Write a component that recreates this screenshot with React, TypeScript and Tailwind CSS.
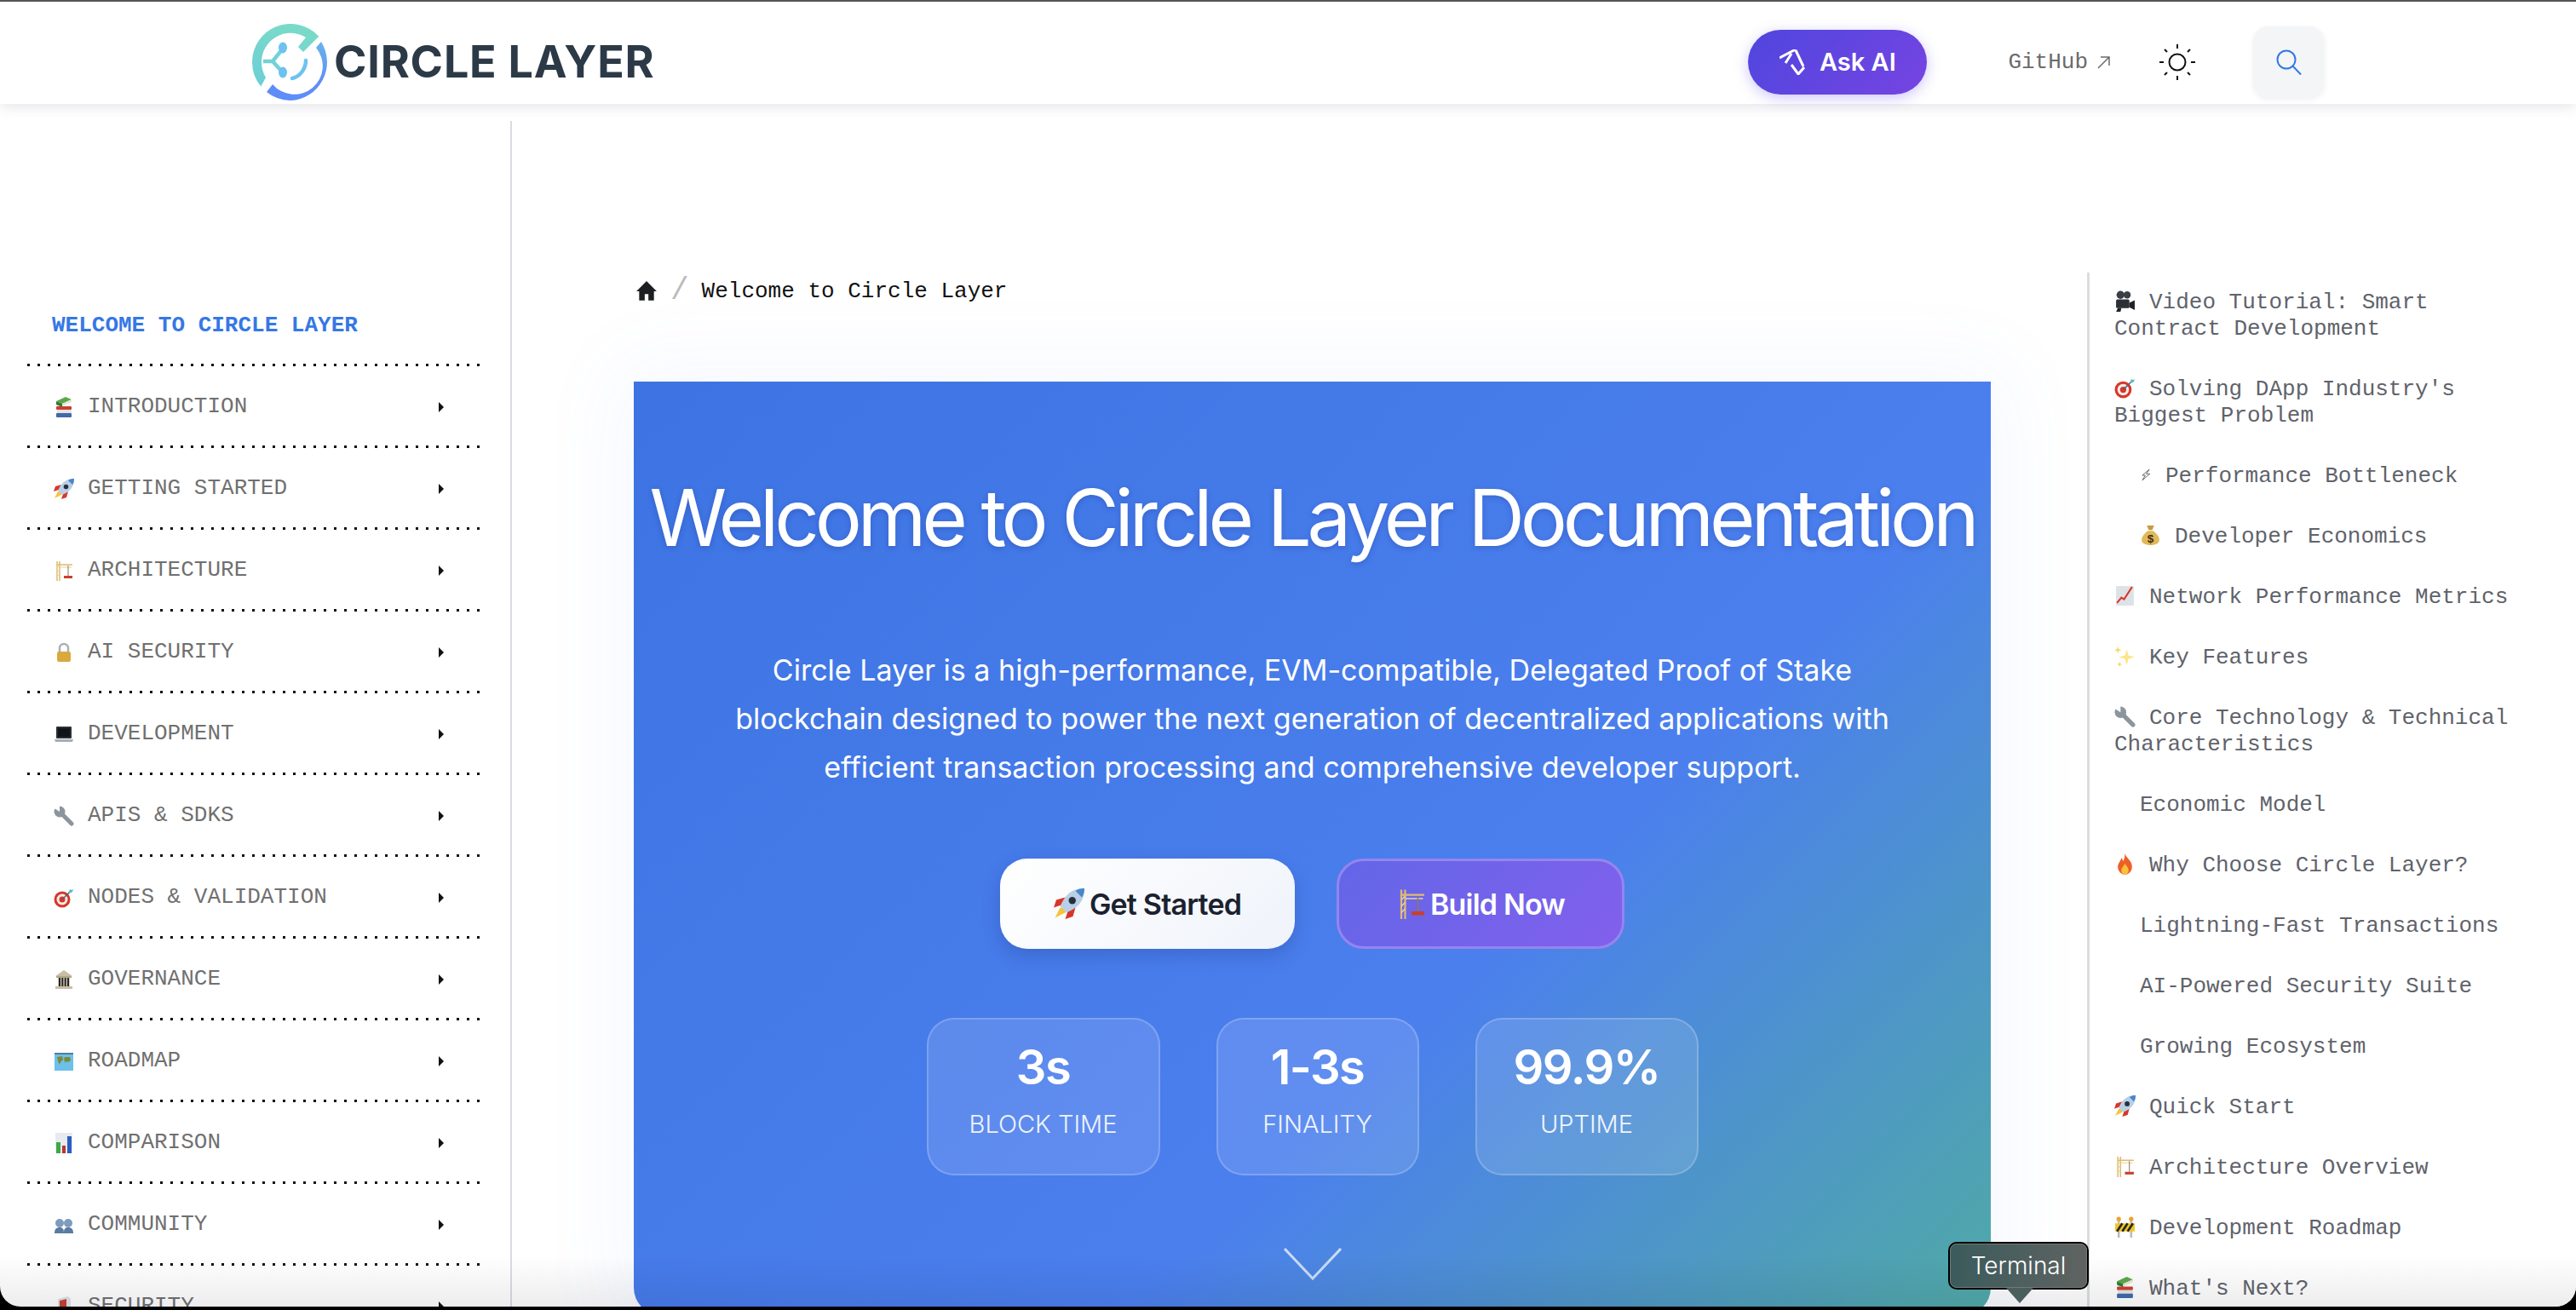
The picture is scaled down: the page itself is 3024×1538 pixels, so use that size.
import { ReactNode } from "react"

const Svg = ({ className, children }: { className?: string; children: ReactNode }) => (
  <svg viewBox="0 0 24 24" className={`inline-block shrink-0 align-[-4px] ${className ?? "w-[25px] h-[25px]"}`}>
    {children}
  </svg>
)

const emoji: Record<string, ReactNode> = {
  books: (
    <>
      <path d="M3 5l11-5 7 3-11 5z" fill="#5BA84A" />
      <path d="M3 5l7 3v4L3 9z" fill="#2F7A35" />
      <path d="M10 8l11-5v3l-11 5z" fill="#E8E6D8" />
      <rect x="3" y="11" width="18" height="4" rx="1" fill="#C8402F" />
      <rect x="4" y="15" width="17" height="4" rx="1" fill="#E8E3E3" />
      <rect x="3" y="19" width="18" height="5" rx="1" fill="#3E6AA8" />
    </>
  ),
  rocket: (
    <>
      <path d="M5 15l-4 8 8-4 1-3z" fill="#F7C23C" />
      <path d="M9 7L2 9l-2 6 6-2zM17 15l-2 7-6 2 2-6z" fill="#D8362A" />
      <path d="M24 0c-8 0-13 3-17 10l-2 4 5 5 4-2c7-4 10-9 10-17z" fill="#B8CFE6" />
      <path d="M24 0c-3 0-5 .6-7 2l5 5c1.400-2 2-4 2-7z" fill="#4A86C8" />
      <circle cx="14.500" cy="9.500" r="2.800" fill="#26303C" />
    </>
  ),
  crane: (
    <>
      <path d="M4 1v23M7 1v23M4 5h18" stroke="#DDBB70" strokeWidth="1.500" fill="none" />
      <path d="M4 9l3-3M4 14l3-3M4 19l3-3M7 8h14" stroke="#E8D39A" strokeWidth="1" />
      <path d="M17 6v12" stroke="#8A7A5A" strokeWidth="1" />
      <rect x="12" y="18" width="10" height="3" fill="#C8402F" />
    </>
  ),
  lock: (
    <>
      <path d="M7 11V7a5 5 0 0 1 10 0v4" fill="none" stroke="#A8B0B8" strokeWidth="2.500" />
      <rect x="4" y="11" width="16" height="12" rx="2" fill="#D9A93C" />
    </>
  ),
  laptop: (
    <>
      <rect x="3" y="3" width="18" height="14" rx="1" fill="#2B2F36" />
      <rect x="5" y="5" width="14" height="10" fill="#111418" />
      <path d="M1 18h22l-1 3H2z" fill="#A8ADB4" />
    </>
  ),
  wrench: (
    <>
      <path d="M7 7L21 21" stroke="#8C959E" strokeWidth="5" strokeLinecap="round" />
      <circle cx="7" cy="7" r="6.500" fill="#8C959E" />
      <path d="M7 7L1 3V0h6z" fill="#fff" />
    </>
  ),
  target: (
    <>
      <circle cx="10" cy="14" r="9.500" fill="#D8362A" />
      <circle cx="10" cy="14" r="6.500" fill="#F5EDE8" />
      <circle cx="10" cy="14" r="3.500" fill="#D8362A" />
      <path d="M10 14l9-9" stroke="#5A6068" strokeWidth="1.500" />
      <path d="M18 6l1-4 2 1 2-1-1 3-4 2z" fill="#4FB8C8" />
    </>
  ),
  bank: (
    <>
      <path d="M12 1L2 8h20z" fill="#C8BFA4" />
      <rect x="3" y="8" width="18" height="2" fill="#B0A688" />
      <rect x="5" y="10" width="14" height="10" fill="#D5CDB4" />
      <path d="M7 10v10M10.300 10v10M13.700 10v10M17 10v10" stroke="#26262A" strokeWidth="2" />
      <rect x="2" y="20" width="20" height="3" fill="#C8BFA4" />
    </>
  ),
  map: (
    <>
      <rect x="1" y="2" width="22" height="21" fill="#6CC0EA" />
      <path d="M4 7l6-1 1 4-3 3-1 3-2-4zM13 7l6 0 1 4-3 2-2-1-1 2-2-4z" fill="#7C8A3A" />
      <path d="M1 2h22v2H1z" fill="#5A7A9A" />
    </>
  ),
  chart: (
    <>
      <rect x="2" y="0" width="20" height="24" fill="#E6EBF0" />
      <rect x="3" y="11" width="5" height="13" fill="#3EA84A" />
      <rect x="10" y="15" width="4" height="9" fill="#C0342A" />
      <rect x="16" y="4" width="5" height="20" fill="#2C5CC0" />
    </>
  ),
  people: (
    <>
      <circle cx="7" cy="10" r="5" fill="#7F9BBE" />
      <circle cx="17" cy="10" r="5" fill="#7F9BBE" />
      <path d="M1 22c0-5 2-7 6-7s5 2 5 7zM12 22c0-5 1-7 5-7s6 2 6 7z" fill="#5A7CA4" />
    </>
  ),
  door: (
    <>
      <path d="M5 3l12-3 3 3v21H5z" fill="#E0E2E4" />
      <path d="M7 5l8-2v18H7z" fill="#C8402F" />
    </>
  ),
  video: (
    <>
      <circle cx="7" cy="5" r="4.500" fill="#3A3F46" />
      <circle cx="14.500" cy="5" r="4" fill="#3A3F46" />
      <rect x="2" y="10" width="15" height="10" rx="1.500" fill="#2C3036" />
      <path d="M17 14l6-3v11l-6-3zM4 20l-2 4h5l1-4z" fill="#1F2227" />
    </>
  ),
  bolt: <path d="M19 1L5 13h6l-6 10 15-13h-7z" fill="none" stroke="#55595F" strokeWidth="1.500" />,
  money: (
    <>
      <path d="M8 1h8l-2 5h-4z" fill="#C89A3C" />
      <path d="M9 7h6c4 3 7 7 7 10 0 4-4 6-10 6S2 21 2 17c0-3 3-7 7-10z" fill="#E2B95A" />
      <text x="12" y="20" textAnchor="middle" fontSize="13" fontWeight="700" fontFamily="Liberation Sans" fill="#3A2E12">
        $
      </text>
    </>
  ),
  trend: (
    <>
      <rect x="2" y="1" width="20" height="22" fill="#DDE2E6" />
      <path d="M3 20l5-6 3 2 9-14" fill="none" stroke="#D8362A" strokeWidth="2" />
    </>
  ),
  sparkles: (
    <>
      <path d="M14 4l2 7 7 2-7 2-2 7-2-7-7-2 7-2z" fill="#FBE68A" />
      <path d="M4 1l1 3 3 1-3 1-1 3-1-3-3-1 3-1zM6 18l.8 2.200 2.200.8-2.200.8L6 24l-.8-2.200L3 21l2.200-.8z" fill="#F5D765" />
    </>
  ),
  fire: (
    <>
      <path d="M12 0c1 5 8 8 8 15 0 5-4 9-8 9s-8-4-8-9c0-4 3-6 4-10 1 1 2 3 2 4 1-2 2-5 2-9z" fill="#EE5F27" />
      <path d="M12 11c1 3 4 4 4 8 0 3-2 5-4 5s-4-2-4-5c0-3 3-5 4-8z" fill="#F9C23C" />
    </>
  ),
  barrier: (
    <>
      <path d="M5 2v22M19 2v22" stroke="#B8BCC0" strokeWidth="2.500" />
      <circle cx="5" cy="3" r="2.500" fill="#F0A030" />
      <circle cx="19" cy="3" r="2.500" fill="#F0A030" />
      <rect x="1" y="8" width="22" height="9" fill="#F0C420" />
      <path d="M3 17l6-9M9 17l6-9M15 17l6-9" stroke="#26262A" strokeWidth="2.500" />
    </>
  ),
}

const navItems = [
  ["books", "INTRODUCTION"],
  ["rocket", "GETTING STARTED"],
  ["crane", "ARCHITECTURE"],
  ["lock", "AI SECURITY"],
  ["laptop", "DEVELOPMENT"],
  ["wrench", "APIS & SDKS"],
  ["target", "NODES & VALIDATION"],
  ["bank", "GOVERNANCE"],
  ["map", "ROADMAP"],
  ["chart", "COMPARISON"],
  ["people", "COMMUNITY"],
  ["door", "SECURITY"],
]

const tocItems: { icon?: string; text: string; sub?: boolean }[] = [
  { icon: "video", text: "Video Tutorial: Smart Contract Development" },
  { icon: "target", text: "Solving DApp Industry's Biggest Problem" },
  { icon: "bolt", text: "Performance Bottleneck", sub: true },
  { icon: "money", text: "Developer Economics", sub: true },
  { icon: "trend", text: "Network Performance Metrics" },
  { icon: "sparkles", text: "Key Features" },
  { icon: "wrench", text: "Core Technology & Technical Characteristics" },
  { text: "Economic Model", sub: true },
  { icon: "fire", text: "Why Choose Circle Layer?" },
  { text: "Lightning-Fast Transactions", sub: true },
  { text: "AI-Powered Security Suite", sub: true },
  { text: "Growing Ecosystem", sub: true },
  { icon: "rocket", text: "Quick Start" },
  { icon: "crane", text: "Architecture Overview" },
  { icon: "barrier", text: "Development Roadmap" },
  { icon: "books", text: "What's Next?" },
]

const stats = [
  { value: "3s", label: "BLOCK TIME", width: "w-[274px]" },
  { value: "1-3s", label: "FINALITY", width: "w-[238px]" },
  { value: "99.9%", label: "UPTIME", width: "w-[262px]" },
]

const Dots = () => (
  <div className="h-[3px] w-[534px] bg-[repeating-linear-gradient(90deg,#111_0_3px,transparent_3px_12px)]" />
)

const Logo = () => (
  <svg viewBox="0 0 90 90" className="w-[90px] h-[90px] shrink-0">
    <defs>
      <linearGradient id="logoTeal" x1="0.500" y1="0" x2="0.200" y2="1">
        <stop offset="0" stopColor="#7ADAC8" />
        <stop offset="1" stopColor="#6CCFD6" />
      </linearGradient>
      <linearGradient id="logoBlue" x1="0.700" y1="0" x2="0.400" y2="1">
        <stop offset="0" stopColor="#68B0EC" />
        <stop offset="0.600" stopColor="#5F8DF8" />
        <stop offset="1" stopColor="#5F8DF8" />
      </linearGradient>
    </defs>
    <path
      d="M10.300 73.600A45 45 0 0 1 0 45A45 45 0 0 1 78.300 14.700L60 33 54 27 63 16A34 34 0 0 0 11 45A34 34 0 0 0 16 63Z"
      fill="url(#logoTeal)"
    />
    <path d="M81 21A45 45 0 0 1 45 90A45 45 0 0 1 17 80L24 71A33 33 0 0 0 75 28Z" fill="url(#logoBlue)" />
    <path d="M13 44H24L36 29M24 44L36 57" fill="none" stroke="#72D2D8" strokeWidth="4.500" />
    <ellipse cx="36" cy="28" rx="5" ry="6.500" fill="#6CC3F0" />
    <ellipse cx="36" cy="57" rx="5" ry="6.500" fill="#6CC3F0" />
    <path d="M63 43C63 53 56 62 47 64" fill="none" stroke="#6CC3F0" strokeWidth="4.500" strokeLinecap="round" />
  </svg>
)

const AskIcon = () => (
  <svg viewBox="0 0 30 30" className="w-[30px] h-[30px]" fill="none" stroke="#fff" strokeWidth="3">
    <path d="M0 10L19 0M19 1L28 20M7 16L14 5M14 18L22 29L29 21" />
  </svg>
)

const Header = () => (
  <header className="h-[120px] shrink-0 flex items-center bg-white shadow-[0_4px_14px_rgba(60,60,90,0.12)] pl-[296px] pt-[22px] z-10">
    <Logo />
    <span className="ml-[6px] text-[52px] font-bold tracking-[0.8px] text-[#2C3A47] font-['Inter',sans-serif]">
      CIRCLE LAYER
    </span>
    <button className="ml-auto w-[210px] h-[76px] rounded-full flex items-center justify-center gap-[17px] text-white text-[29px] font-semibold font-['Inter',sans-serif] bg-[linear-gradient(135deg,#4F46DE,#7644E2)] shadow-[0_4px_16px_rgba(90,70,230,0.3)]">
      <AskIcon />
      Ask AI
    </button>
    <a className="ml-[95px] flex items-center text-[26px] text-[#6B6B6B] font-['Liberation_Mono',monospace]">
      GitHub
      <svg viewBox="0 0 16 16" className="ml-[10px] w-[16px] h-[16px]" fill="none" stroke="#6B6B6B" strokeWidth="1.500">
        <path d="M2 15L15 2M5 2h10v10" />
      </svg>
    </a>
    <svg viewBox="0 0 42 42" className="ml-[58px] w-[42px] h-[42px]" fill="none" stroke="#111" strokeWidth="2">
      <circle cx="21" cy="21" r="9.500" />
      <path d="M21 0v5M21 37v5M0 21h5M37 21h5M6 6l3 3M33 33l3 3M6 36l3-3M33 9l3-3" />
    </svg>
    <div className="ml-[68px] mr-[295px] w-[84px] h-[84px] rounded-[18px] bg-[#F4F5F7] shadow-[0_2px_6px_rgba(60,60,90,0.08)] flex items-center justify-center">
      <svg viewBox="0 0 30 30" className="w-[30px] h-[30px]" fill="none" stroke="#3578E5" strokeWidth="2">
        <circle cx="12" cy="12" r="10.500" />
        <path d="M19.500 19.500L29 29.500" />
      </svg>
    </div>
  </header>
)

const Sidebar = () => (
  <aside className="w-[601px] shrink-0 mt-[20px] border-r-2 border-[#DADCE3] pt-[196px] pl-[32px] font-['Liberation_Mono',monospace] text-[26px]">
    <div className="h-[89px] flex items-center pl-[29px] font-bold text-[#3578E5]">WELCOME TO CIRCLE LAYER</div>
    <Dots />
    {navItems.map(([icon, label]) => (
      <div key={label}>
        <div className="h-[93px] w-[534px] flex items-center pl-[31px] pt-[2px] text-[#707070]">
          <Svg className="w-[24px] h-[24px]">{emoji[icon]}</Svg>
          <span className="ml-[16px]">{label}</span>
          <span className="ml-auto mr-[45px] w-0 h-0 border-y-[6px] border-y-transparent border-l-[6px] border-l-[#111]" />
        </div>
        <Dots />
      </div>
    ))}
  </aside>
)

const Hero = () => (
  <section className="h-[1096px] rounded-b-[32px] text-white text-center pt-[104px] bg-[linear-gradient(135deg,#3D73E2_0%,#4B7FEE_62%,#50AAA6_100%)] shadow-[0_0_100px_20px_rgba(100,140,255,0.06)] font-['Inter',sans-serif]">
    <h1 className="text-[92px] leading-[112px] font-normal tracking-[-5.100px] whitespace-nowrap [text-shadow:0_2px_6px_rgba(20,40,120,0.25)]">
      Welcome to Circle Layer Documentation
    </h1>
    <p className="mt-[94px] text-[34px] leading-[57px] font-normal">
      Circle Layer is a high-performance, EVM-compatible, Delegated Proof of Stake
      <br />
      blockchain designed to power the next generation of decentralized applications with
      <br />
      efficient transaction processing and comprehensive developer support.
    </p>
    <div className="mt-[79px] flex justify-center gap-[49px]">
      <button className="w-[346px] h-[106px] rounded-[32px] flex items-center justify-center gap-[6px] text-[34px] font-semibold tracking-[-0.800px] text-[#1B2130] bg-[linear-gradient(135deg,#FFFFFF,#EFF3FA)] shadow-[0_8px_20px_rgba(30,50,120,0.25)]">
        <Svg className="w-[36px] h-[36px]">{emoji.rocket}</Svg>
        Get Started
      </button>
      <button className="w-[338px] h-[106px] rounded-[32px] flex items-center justify-center gap-[4px] text-[34px] font-semibold tracking-[-0.800px] border-[3px] border-[#9585EE] bg-[linear-gradient(135deg,#6266E8,#8260EC)]">
        <Svg className="w-[36px] h-[36px]">{emoji.crane}</Svg>
        Build Now
      </button>
    </div>
    <div className="mt-[81px] flex justify-center gap-[66px]">
      {stats.map((s) => (
        <div
          key={s.label}
          className={`${s.width} h-[185px] rounded-[32px] border-2 border-white/20 bg-white/12 flex flex-col items-center pt-[22px]`}
        >
          <span className="text-[56px] leading-[68px] font-semibold tracking-[-1.500px]">{s.value}</span>
          <span className="mt-[15px] text-[29px] leading-[36px] font-light text-white/90">{s.label}</span>
        </div>
      ))}
    </div>
    <svg viewBox="0 0 68 38" className="mx-auto mt-[85px] w-[68px] h-[38px]" fill="none" stroke="#fff" strokeOpacity="0.7" strokeWidth="3">
      <path d="M1 1l33 35L67 1" />
    </svg>
  </section>
)

const Toc = () => (
  <aside className="mt-[198px] flex-1 border-l-[3px] border-[#DCDDE0] pl-[29px] pt-[20px] bg-white font-['Liberation_Mono',monospace] text-[26px] leading-[31px] text-[#5F636B]">
    {tocItems.map((item) => (
      <div key={item.text} className={`mb-[40px] w-[480px] ${item.sub ? "pl-[30px]" : ""}`}>
        {item.icon && (
          <Svg className={item.icon === "bolt" ? "w-[14px] h-[25px] mr-[16px]" : "w-[25px] h-[25px] mr-[16px]"}>
            {emoji[item.icon]}
          </Svg>
        )}
        {item.text}
      </div>
    ))}
  </aside>
)

export default function App() {
  return (
    <div className="w-[3024px] h-[1538px] overflow-hidden bg-black">
      <div className="relative h-[1534px] flex flex-col overflow-hidden rounded-b-[24px] bg-white border-t-2 border-[#555]">
        <Header />
        <div className="flex flex-1 min-h-0">
          <Sidebar />
          <main className="w-[1849px] shrink-0 pl-[143px] pr-[113px]">
            <div className="h-[326px] flex items-center gap-[15px] pt-[114px] font-['Liberation_Mono',monospace] text-[26px] text-[#111]">
              <svg viewBox="0 0 24 24" className="w-[26px] h-[26px] ml-[2px]" fill="#1C1E21">
                <path d="M12 1L1 12h3v10h6v-7h4v7h6V12h3z" />
              </svg>
              <span className="text-[36px] font-light text-[#BBB]">/</span>
              <span>Welcome to Circle Layer</span>
            </div>
            <Hero />
          </main>
          <Toc />
        </div>
        <div className="absolute inset-x-0 bottom-0 h-[60px] bg-[linear-gradient(transparent,rgba(20,20,40,0.08))]" />
        <div className="absolute left-[2287px] top-[1456px] w-[165px] h-[56px] rounded-[10px] border-2 border-black outline outline-[1px] outline-[#777] -outline-offset-3 bg-[linear-gradient(90deg,#3B5B5C,#5F6361)] text-white text-[28px] font-['Inter',sans-serif] font-light flex items-center justify-center">
          Terminal
          <span className="absolute left-[66px] top-[52px] w-0 h-0 border-x-[16px] border-x-transparent border-t-[18px] border-t-[#4B5E5E]" />
        </div>
      </div>
    </div>
  )
}
